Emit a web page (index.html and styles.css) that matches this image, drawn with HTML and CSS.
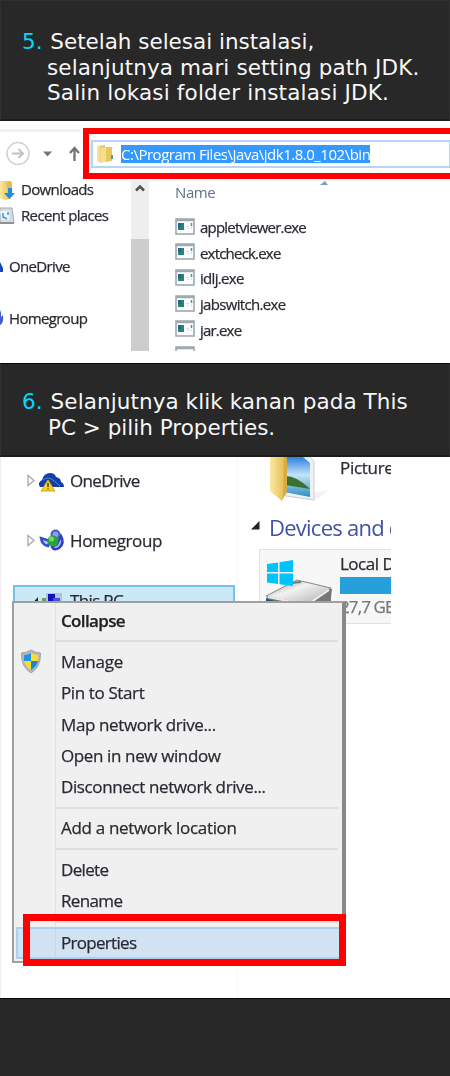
FILE: index.html
```html
<!DOCTYPE html>
<html lang="id">
<head>
<meta charset="utf-8">
<title>Setting path JDK</title>
<link rel="stylesheet" href="styles.css">
</head>
<body>
<svg class="defs" width="0" height="0">
  <defs>
    <linearGradient id="gold" x1="0" x2="1"><stop offset="0" stop-color="#fbe9a0"/><stop offset="1" stop-color="#e3b94c"/></linearGradient>
    <linearGradient id="sky" x1="0" y1="0" x2="0" y2="1"><stop offset="0" stop-color="#2d7fe0"/><stop offset=".45" stop-color="#c4e4f8"/><stop offset="1" stop-color="#2f8fc0"/></linearGradient>
    <linearGradient id="metal" x1="0" x2="1" y2="1"><stop offset="0" stop-color="#8e8e8e"/><stop offset=".4" stop-color="#f2f2f2"/><stop offset="1" stop-color="#a8a8a8"/></linearGradient>
    <linearGradient id="teal" x1="0" x2="1"><stop offset="0" stop-color="#145063"/><stop offset=".5" stop-color="#1b9a93"/><stop offset="1" stop-color="#33444c"/></linearGradient>
    <symbol id="exe" viewBox="0 0 20 17">
      <rect x="1" y="1" width="18" height="15" fill="#fbfcfd" stroke="#9aa3a8" stroke-width="1.5"/>
      <path d="M1 2.2h18" stroke="#9ea8af" stroke-width="2"/>
      <rect x="3" y="5" width="6" height="7" fill="#28846c"/><rect x="3" y="5" width="3" height="4" fill="#226496"/>
      <path d="M11 8.500h3M12 10.500h2" stroke="#d9dddf"/><path d="M16.500 5v3" stroke="#4099a0" stroke-width="1.500"/><path d="M16 10h1" stroke="#b6c0c5"/>
    </symbol>
  </defs>
</svg>
<header class="step step-five">
  <p class="lead l1"><span class="num">5.</span> Setelah selesai instalasi,</p>
  <p class="l2">selanjutnya mari setting path JDK.</p>
  <p class="l3">Salin lokasi folder instalasi JDK.</p>
</header>

<section class="explorer">
  <div class="toolbar">
    <svg class="nav" viewBox="0 0 83 60" width="83" height="60">
      <path d="M0 9.500H81" stroke="#ececec" stroke-width="2"/>
      <circle cx="18" cy="32.500" r="11" fill="none" stroke="#d3d3d3" stroke-width="1.600"/>
      <path d="M12 32.500h11M18.500 28l4.500 4.500-4.500 4.500" fill="none" stroke="#c2c2c2" stroke-width="2"/>
      <path d="M43 30.500h9l-4.500 5z" fill="#777"/>
      <path d="M74.500 40V27M70 32l4.500-5 4.500 5" fill="none" stroke="#737373" stroke-width="2.300"/>
    </svg>
    <div class="frame">
      <div class="address">
        <svg width="18" height="20" viewBox="0 0 18 20">
          <path d="M1 2l8-1v16l-4 2-4-2z" fill="url(#gold)"/><path d="M9 3h7v14l-7 1z" fill="#e6c661"/><path d="M5 4l5-1v14l-5 2z" fill="#f5df8b"/><path d="M16 11v4" stroke="#5b9a81" stroke-width="2"/>
        </svg>
        <span class="path">C:\Program Files\Java\jdk1.8.0_102\bin</span>
      </div>
    </div>
  </div>
  <div class="body">
    <nav class="side">
      <div class="row"><svg width="21" height="22" viewBox="0 0 21 22"><path d="M0 2h11v17l-5 2-6-2z" fill="url(#gold)"/><path d="M7 10h5V3l-5 1z" fill="#e0bd58"/><path d="M8 9h4v5h3l-5.500 6-5.500-6h4z" fill="#1e8ee2"/></svg><span class="t-down">Downloads</span></div>
      <div class="row"><svg width="21" height="22" viewBox="0 0 21 22"><path d="M0 3h12l2 15H0z" fill="#d9dde0" stroke="#a2a8ac"/><path d="M0 6h9v9H2z" fill="#edf6fa"/><path d="M3 8v4l4 2M8 7v3" stroke="#3d9cd3" stroke-width="1.500" fill="none"/><path d="M0 18h14" stroke="#919191" stroke-width="2"/></svg><span class="t-rec">Recent places</span></div>
      <div class="row gap"><svg width="9" height="22" viewBox="0 0 9 22"><path d="M0 6q1 2 3 6v4H0z" fill="#1549be"/></svg><span class="t-one">OneDrive</span></div>
      <div class="row gap"><svg width="9" height="22" viewBox="0 0 9 22"><path d="M0 3q2 3 1 7l2-2q1 8-3 10z" fill="#4360c8"/></svg><span class="t-home">Homegroup</span></div>
    </nav>
    <div class="scroll"><svg width="18" height="16" viewBox="0 0 18 16"><path d="M5 9.500l4-4 4 4" fill="none" stroke="#505050" stroke-width="2.500"/></svg><div class="thumb"></div></div>
    <div class="files">
      <div class="name"><span>Name</span><svg width="9" height="5" viewBox="0 0 9 5"><path d="M0 4l5-4 3 4z" fill="#6ba6be"/></svg></div>
      <div class="file"><svg width="20" height="17"><use href="#exe"/></svg><span class="f1">appletviewer.exe</span></div>
      <div class="file"><svg width="20" height="17"><use href="#exe"/></svg><span class="f2">extcheck.exe</span></div>
      <div class="file"><svg width="20" height="17"><use href="#exe"/></svg><span class="f3">idlj.exe</span></div>
      <div class="file"><svg width="20" height="17"><use href="#exe"/></svg><span class="f4">jabswitch.exe</span></div>
      <div class="file"><svg width="20" height="17"><use href="#exe"/></svg><span class="f5">jar.exe</span></div>
      <div class="file last"><svg width="20" height="17"><use href="#exe"/></svg><span>javac.exe</span></div>
    </div>
  </div>
</section>

<header class="step step-six">
  <p class="lead l4"><span class="num">6.</span> Selanjutnya klik kanan pada This</p>
  <p class="l5">PC &gt; pilih Properties.</p>
</header>

<section class="computer">
  <div class="shot">
    <nav class="tree">
      <div class="node">
        <svg width="46" height="26" viewBox="0 0 46 26"><path d="M4 7.500v10l6-5z" fill="#fff" stroke="#aaa" stroke-width="1.300"/><path d="M16 19q-3-4 2-7 2-7 8-7 5 0 6 4 5 1 5 5 3 1 3 5z" fill="#123fa9"/><path d="M19 12q5-4 10 0l7 6" stroke="#6286d4" fill="none"/><path d="M24 12l7 11H17z" fill="#f5d126" stroke="#c6ac25"/><path d="M24 15v4M24 20.500v1" stroke="#5a4700" stroke-width="1.500"/></svg>
        <span class="n1">OneDrive</span>
      </div>
      <div class="node">
        <svg width="46" height="26" viewBox="0 0 46 26"><path d="M4 7.500v10l6-5z" fill="#fff" stroke="#aaa" stroke-width="1.300"/><circle cx="31.500" cy="6.500" r="4" fill="#8d9de4" stroke="#475cc5" stroke-width="2"/><path d="M17 10q1 7 7 8l2-5z" fill="#b1c6f2" stroke="#2f50c8" stroke-width="2.500"/><path d="M37 8q4 7-2 12-5 3-7-1l5-3z" fill="#a7b5ee" stroke="#2f3ec2" stroke-width="2.500"/><circle cx="29" cy="13" r="5.500" fill="#2ba33b"/><circle cx="27.500" cy="11" r="2.500" fill="#7bd66a"/></svg>
        <span class="n2">Homegroup</span>
      </div>
      <div class="node current">
        <svg width="46" height="26" viewBox="0 0 46 26"><path d="M14 8v9H6z" fill="#222"/><path d="M18 9h4v5h-4z" fill="#60a750"/><path d="M22 4h16v14H22z" fill="#b7bfda"/><path d="M24 5h7v10h-7z" fill="#1112b9"/><path d="M29 9h7v6h-7z" fill="#3d57dc"/></svg>
        <span class="n3">This PC</span>
      </div>
    </nav>
    <div class="content">
      <div class="pictures">
        <svg width="70" height="46" viewBox="0 0 70 46"><path d="M44 36L60 33 54 39 46 44z" fill="#f3f3f3"/><path d="M20 0h22l4 4v39l-28-4z" fill="#edf1f4" stroke="#c9cdd0"/><path d="M18 0h17l7 6v34l-26-5z" fill="url(#sky)"/><path d="M17 19q12 0 25 13l-25-4z" fill="#39712d"/><path d="M2 0h16v36l-4 8L2 34z" fill="url(#gold)"/><path d="M16 0h3v34l-4 8z" fill="#d9aa3d"/></svg>
        <span class="p1">Pictures</span>
      </div>
      <div class="devices"><svg width="9" height="9" viewBox="0 0 9 9"><path d="M8.500 0v8.500H0z" fill="#222"/></svg><span>Devices and drives</span></div>
      <div class="disk">
        <svg width="80" height="73" viewBox="0 0 80 73">
          <path d="M6 48L36 31l36 8-2 17-34 18-30-9z" fill="#777"/><path d="M6 46L37 30l34 8-23 17z" fill="url(#metal)" stroke="#888"/><path d="M6 49l41 8v14L6 66z" fill="url(#teal)"/><path d="M47 57l24-16v13L47 71z" fill="#777"/><path d="M8 47l39 8 22-15" fill="none" stroke="#eee" stroke-width="2"/><path d="M31 33l10-1" stroke="#777" stroke-width="2"/>
          <path d="M7 14l11-1.600V22H7zM19.500 12.200L33 10v12H19.500zM7 23.500h11V34L7 32.500zM19.500 23.500H33V36l-13.500-1.800z" fill="#00c3fa"/>
        </svg>
        <div class="info"><span class="label">Local Disk</span><div class="bar"></div><span class="free">27,7 GB free</span></div>
      </div>
    </div>
  </div>

  <div class="menu">
    <div class="item bold"><span class="m1">Collapse</span></div>
    <hr>
    <div class="item"><svg class="shield" width="22" height="25" viewBox="0 0 22 25"><path d="M11 1q5 3 9.500 3 .5 14-9.500 20Q1 18 1.500 4 6 4 11 1z" fill="#b5b8b8" stroke="#a2a4a4"/><path d="M11 4v8H4V6q4 0 7-2z" fill="#2592e6"/><path d="M11 4v8h7V6q-4 0-7-2z" fill="#ffdc26"/><path d="M4 12h7v9q-6-4-7-9z" fill="#ffdc26"/><path d="M18 12h-7v9q6-4 7-9z" fill="#1686df"/></svg><span class="m2">Manage</span></div>
    <div class="item"><span class="m3">Pin to Start</span></div>
    <div class="item"><span class="m4">Map network drive...</span></div>
    <div class="item"><span class="m5">Open in new window</span></div>
    <div class="item"><span class="m6">Disconnect network drive...</span></div>
    <hr>
    <div class="item"><span class="m7">Add a network location</span></div>
    <hr>
    <div class="item"><span class="m8">Delete</span></div>
    <div class="item"><span class="m9">Rename</span></div>
    <hr>
    <div class="item hot"><span class="m10">Properties</span></div>
    <div class="callout"></div>
  </div>
</section>
<footer class="foot"></footer>
</body>
</html>
```
FILE: styles.css
```css
* { box-sizing: border-box; }
body { margin: 0; width: 450px; height: 1076px; overflow: hidden; background: #fff; font-family: "Open Sans", "Noto Sans", sans-serif; color: #2a2a33; }
.defs { display: block; height: 0; }
svg { display: block; flex: none; }
span { white-space: nowrap; }
p { margin: 0; white-space: nowrap; }

.step { background: #282828; color: #f7f7f7; border: 1px solid #303030; border-bottom: 2px solid #1c1c1c; font: 21.500px/25.700px "DejaVu Sans", Verdana, sans-serif; padding-left: 47px; }
.step-five { height: 121px; padding-top: 28px; }
.step-six { height: 94px; padding-top: 25px; border-top: 1px solid #080808; }
.lead { margin-left: -26px; }
.num { color: #00d9ff; margin-right: 1px; }
.l1 { letter-spacing: -.02px; }
.l2, .l4 { letter-spacing: .08px; }
.l2, .l3 { margin-left: -1px; }
.l2 { letter-spacing: .12px; }
.l3 { letter-spacing: .17px; }

.explorer { height: 242px; overflow: hidden; }
.toolbar { display: flex; height: 60px; }
.frame { flex: none; width: 374px; height: 51px; margin-top: 7px; border: 6px solid #f00; padding: 6px 0 0 2px; }
.address { display: flex; align-items: center; height: 28px; border: 2px solid #b5d5f3; padding-left: 3px; }
.path { margin-left: 7px; background: #3399ff; color: #fff; font-size: 15px; line-height: 18px; height: 18px; filter: blur(.35px); letter-spacing: -.49px; }
.body { display: flex; height: 170px; overflow: hidden; font-size: 15px; }
.body span, .shot span, .item span { filter: blur(.45px); -webkit-text-stroke: .25px currentColor; }
.body svg, .shot svg, .item svg, .nav, .address svg { filter: blur(.4px); }
.side { width: 131px; flex: none; margin-top: -4px; }
.row { display: flex; align-items: center; height: 25.700px; line-height: 25px; letter-spacing: -.65px; }
.row.gap { margin-top: 25.700px; }
.scroll { width: 18px; height: 170px; background: #eee; display: flex; flex-direction: column; }
.thumb { margin-top: 42px; height: 112px; background: #cdcdcd; }
.files { padding-left: 26px; }
.name { display: flex; height: 34px; color: #61728c; line-height: 22px; width: 154px; justify-content: space-between; letter-spacing: -.4px; }
.name span { -webkit-text-stroke: 0; }
.file { display: flex; align-items: center; gap: 5px; height: 25.600px; line-height: 25px; letter-spacing: -.8px; }
.file svg { margin-bottom: 3px; }
.f3, .f4 { letter-spacing: -.68px; }

.computer { position: relative; height: 541px; }
.shot { display: flex; width: 391px; height: 541px; overflow: hidden; border-left: 1px solid #eee; }
.tree { width: 237px; flex: none; border-right: 1px solid #f7f7f7; padding: 8px 0 0 12px; }
.node { display: flex; align-items: center; height: 31px; margin-bottom: 29px; padding-left: 11px; font-size: 17px; line-height: 30px; letter-spacing: -.65px; }
.n2 { letter-spacing: -.35px; }
.current { width: 222px; height: 34px; background: #cbe8f7; border: 2px solid #75c3e8; padding-left: 9px; }
.current span { margin-top: -3px; }
.content { padding-left: 13px; }
.pictures { display: flex; height: 46px; padding-left: 17px; font-size: 17px; line-height: 22px; gap: 2px; letter-spacing: -.3px; }
.devices { display: flex; align-items: center; height: 46px; margin-top: 1px; font-size: 22px; color: #4052a1; gap: 9px; line-height: 30px; letter-spacing: -.75px; }
.devices svg { margin-top: -3px; }
.shot .devices span { -webkit-text-stroke: 0; }
.disk { display: flex; width: 180px; height: 75px; margin: -1px 0 0 8px; background: #f7f7f7; border: 1px solid #e1e1e1; }
.info { width: 100px; font-size: 17px; letter-spacing: -.5px; }
.label { display: block; line-height: 27px; height: 27px; }
.bar { height: 17px; background: #26a0da; }
.free { display: block; color: #777; line-height: 26px; letter-spacing: -.9px; }

.menu { position: absolute; left: 12px; top: 144px; width: 334px; height: 362px; background: linear-gradient(to right, #f0f0f0 0 41px, #e2e2e2 41px 42px, #f0f0f0 42px); border: 2px solid #a0a0a0; border-right: 4px solid #888; padding-top: 2px; }
.item { display: flex; align-items: center; height: 31.300px; padding-left: 47px; font-size: 17px; line-height: 30px; letter-spacing: -.38px; }
.bold { font-weight: 600; color: #222; }
.m1, .m8, .m9 { letter-spacing: -.65px; }
.m2 { letter-spacing: -.2px; }
.m7 { letter-spacing: -.32px; }
.m10 { letter-spacing: -.7px; }
.shield { margin: 0 19px 0 -41px; }
hr { height: 2px; border: 0; background: #dedede; margin: 4px 4px 4px 42px; }
.hot { width: 325px; margin: 1px 0 0 2px; padding-left: 43px; background: linear-gradient(to right, #d1e2f2 0 37px, #c4d5e5 37px 38px, #d1e2f2 38px); border: 2px solid #aecff0; height: 32px; }
.callout { position: absolute; left: 9px; top: 311px; width: 323px; height: 52px; border: 7px solid #f00; }
.foot { height: 78px; background: #282828; border-top: 1px solid #080808; }
```
